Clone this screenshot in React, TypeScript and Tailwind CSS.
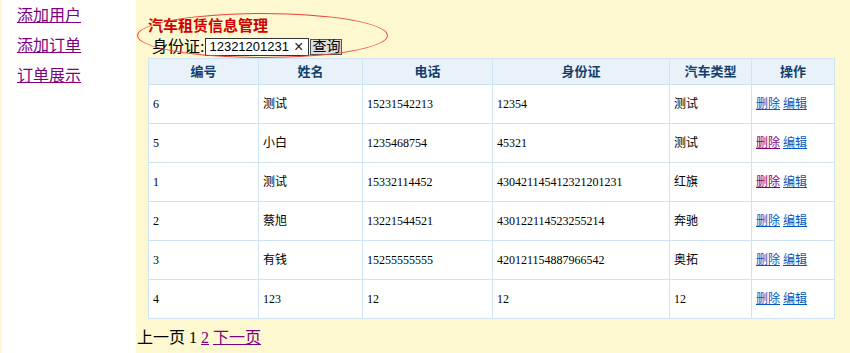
import React from "react";

type Row = {
  id: string;
  name: string;
  phone: string;
  idCard: string;
  carType: string;
  visited?: boolean;
};

const rows: Row[] = [
  { id: "6", name: "测试", phone: "15231542213", idCard: "12354", carType: "测试" },
  { id: "5", name: "小白", phone: "1235468754", idCard: "45321", carType: "测试", visited: true },
  { id: "1", name: "测试", phone: "15332114452", idCard: "430421145412321201231", carType: "红旗", visited: true },
  { id: "2", name: "蔡旭", phone: "13221544521", idCard: "430122114523255214", carType: "奔驰" },
  { id: "3", name: "有钱", phone: "15255555555", idCard: "420121154887966542", carType: "奥拓" },
  { id: "4", name: "123", phone: "12", idCard: "12", carType: "12" },
];

const headers = [
  { label: "编号", w: "w-[110px]" },
  { label: "姓名", w: "w-[104px]" },
  { label: "电话", w: "w-[130px]" },
  { label: "身份证", w: "w-[177px]" },
  { label: "汽车类型", w: "w-[82px]" },
  { label: "操作", w: "w-[83px]" },
];

const cjk = "font-['Liberation_Serif','Noto_Sans_CJK_SC',serif]";

export default function App() {
  return (
    <div className={`flex h-[353px] w-[850px] bg-[#fdf8cf] ${cjk} text-black`}>
      {/* sidebar */}
      <div className="ml-[2px] flex w-[134px] flex-col bg-white pl-[15px] pt-[5px]">
        {["添加用户", "添加订单", "订单展示"].map((t) => (
          <a
            key={t}
            href="#"
            className="h-[30px] text-[16px] leading-[21px] text-[#800080] underline"
          >
            {t}
          </a>
        ))}
      </div>

      {/* main */}
      <div className="relative flex flex-1 flex-col pt-[17px]">
        <div className="flex flex-col pl-[12px]">
          <h1 className="text-[15px] font-bold leading-[18px] text-[#d00000]">
            汽车租赁信息管理
          </h1>
          <div className="ml-[4px] mt-[2px] flex h-[19px] items-center text-[16px] leading-[18px]">
            <span>身份证:</span>
            <div className="ml-[1px] flex h-[18px] w-[104px] items-center overflow-hidden border border-[#333] bg-white pl-[3px] font-['Liberation_Sans',sans-serif] text-[13px]">
              <span className="flex-1 overflow-hidden whitespace-nowrap">12321201231</span>
              <span className="pr-[5px] text-[16px] leading-none text-[#222]">×</span>
            </div>
            <button className="ml-[1px] h-[16px] border border-[#555] bg-[#dcdcdc] px-[1px] text-[14px] leading-[14px]">
              查询
            </button>
          </div>
          <table className="mt-[2px] w-[687px] table-fixed border-collapse text-[12px]">
            <thead>
              <tr className="h-[26px] bg-[#e9f1f9]">
                {headers.map((h) => (
                  <th
                    key={h.label}
                    className={`${h.w} border border-[#cfe2f6] text-center text-[13px] font-bold text-[#123f6e]`}
                  >
                    {h.label}
                  </th>
                ))}
              </tr>
            </thead>
            <tbody>
              {rows.map((r) => (
                <tr key={r.id} className="h-[39px] bg-white">
                  <td className="border border-[#cfe2f6] pl-[4px]">{r.id}</td>
                  <td className="border border-[#cfe2f6] pl-[4px]">{r.name}</td>
                  <td className="border border-[#cfe2f6] pl-[4px]">{r.phone}</td>
                  <td className="border border-[#cfe2f6] pl-[4px]">{r.idCard}</td>
                  <td className="border border-[#cfe2f6] pl-[4px]">{r.carType}</td>
                  <td className="border border-[#cfe2f6] pl-[4px]">
                    <a
                      href="#"
                      className={`underline ${r.visited ? "text-[#800080]" : "text-[#0058c0]"}`}
                    >
                      删除
                    </a>{" "}
                    <a href="#" className="text-[#0058c0] underline">
                      编辑
                    </a>
                  </td>
                </tr>
              ))}
            </tbody>
          </table>
        </div>
        <div className="ml-[1px] mt-[9px] text-[16px] leading-[20px]">
          上一页 1{" "}
          <a href="#" className="text-[#800080] underline">
            2
          </a>{" "}
          <a href="#" className="text-[#800080] underline">
            下一页
          </a>
        </div>

        {/* annotation ellipse */}
        <div className="pointer-events-none absolute left-[1px] top-[13px] h-[45px] w-[251px] rounded-[50%] border border-[#e8443c]" />
      </div>
    </div>
  );
}
